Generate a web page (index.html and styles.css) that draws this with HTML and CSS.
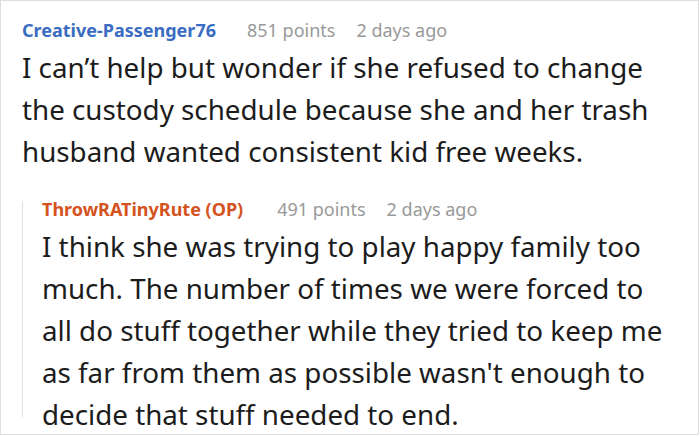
FILE: index.html
```html
<!DOCTYPE html>
<html>

<head>
    <meta charset="utf-8">
    <link rel="stylesheet" href="styles.css">
</head>

<body>
    <section class="thread">
        <div class="comment">
            <div class="meta">
                <span class="author">Creative-Passenger76</span>
                <span class="points">851 points</span>
                <span class="when">2 days ago</span>
            </div>
            <p class="text">I can’t help but wonder if she refused to change the custody schedule because she and her trash husband wanted consistent kid free weeks.</p>
        </div>

        <div class="comment reply">
            <div class="meta">
                <span class="author op">ThrowRATinyRute (OP)</span>
                <span class="points">491 points</span>
                <span class="when">2 days ago</span>
            </div>
            <p class="text">I think she was trying to play happy family too much. The number of times we were forced to all do stuff together while they tried to keep me as far from them as possible wasn't enough to decide that stuff needed to end.</p>
        </div>
    </section>
</body>

</html>
```

FILE: styles.css
```css
/* comment thread card */

body {
    margin: 0;
    background: #fff;
    font-family: "Noto Sans", "Open Sans", sans-serif;
}

.thread {
    box-sizing: border-box;
    width: 699px;
    height: 435px;
    border: 1px solid #dedede;
    padding: 17px 20px 0 21px;
    overflow: hidden;
}

/* name, points and age on one line */

.meta {
    display: flex;
    gap: 21px;
    font-size: 18px;
    line-height: 24px;
    color: #999;
}

.author {
    font-weight: 700;
    color: #3a6cc1;
    margin-right: 10px;
}

.author.op {
    color: #d4531f;
    margin-right: 13px;
}

.text {
    margin: 4px 0 0;
    font-size: 27.75px;
    line-height: 42px;
    color: #1c1c1c;
}

/* the reply is indented, with a thin line down its left side */

.reply {
    position: relative;
    margin-top: 25px;
    padding-left: 20px;
}

.reply::before {
    content: "";
    position: absolute;
    left: 0;
    top: 4px;
    bottom: 18px;
    width: 1px;
    background: #e0e0e0;
}
```
